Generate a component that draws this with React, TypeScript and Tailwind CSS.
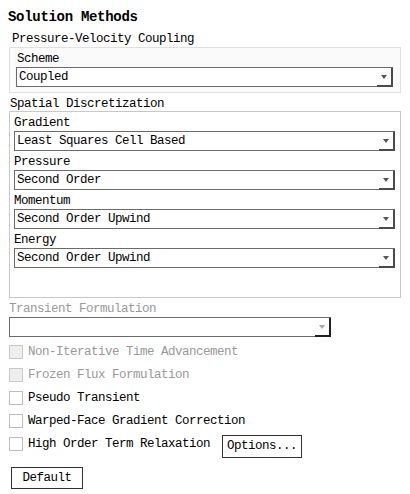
import React from 'react'

const mono = "font-['Liberation_Mono','DejaVu_Sans_Mono',monospace] text-[12.5px] tracking-[-0.5px]"

const Select: React.FC<{ value?: string; disabled?: boolean; className?: string }> = ({ value, disabled, className }) => (
  <div className={`flex h-[20px] border-t border-l border-[#6b6b6b] bg-white ${className ?? ''}`}>
    <span className={`flex-1 border-b border-[#6b6b6b] pl-[2px] leading-[19px] ${disabled ? 'text-[#999]' : 'text-black'}`}>
      {value}
    </span>
    <span className={`flex w-[16px] items-center justify-center border-r-2 border-b-2 ${disabled ? 'border-[#222]' : 'border-[#4a4a4a]'}`}>
      <span
        className={`h-0 w-0 border-t-[4px] border-r-[3px] border-l-[3px] border-r-transparent border-l-transparent ${
          disabled ? 'border-t-[#aaa]' : 'border-t-[#555]'
        }`}
      />
    </span>
  </div>
)

const Check: React.FC<{ label: string; disabled?: boolean }> = ({ label, disabled }) => (
  <div className="flex h-[23px] items-center">
    <span
      className={`h-[14px] w-[14px] border ${disabled ? 'border-[#c8c8c8] bg-[#eeeeee]' : 'border-[#bdbdbd] bg-white'}`}
    />
    <span className={`ml-[5px] pt-[1px] whitespace-nowrap ${disabled ? 'text-[#999]' : 'text-black'}`}>{label}</span>
  </div>
)

const Label: React.FC<{ children: React.ReactNode; className?: string }> = ({ children, className }) => (
  <div className={`h-[19px] pt-[3px] leading-[16px] whitespace-nowrap ${className ?? ''}`}>{children}</div>
)

export default function App() {
  return (
    <div className={`h-[494px] w-[410px] overflow-hidden bg-white text-black ${mono}`}>
      {/* header */}
      <div className="pt-[8px] pl-[8px]">
        <div className="h-[18px] text-[14px] leading-[18px] font-bold tracking-[-0.3px]">Solution Methods</div>
      </div>
      <Label className="mt-[2px] pl-[12px]">Pressure-Velocity Coupling</Label>

      {/* coupling group */}
      <div className="ml-[9px] w-[392px] border border-[#e0e0e0] bg-[#fafafa] pb-[5px]">
        <Label className="pl-[7px]">Scheme</Label>
        <Select value="Coupled" className="ml-[6px] w-[377px]" />
      </div>

      <div className="mt-[2px] h-[16px] pt-[2px] pl-[10px] leading-[14px] whitespace-nowrap">Spatial Discretization</div>

      {/* spatial group */}
      <div className="ml-[9px] w-[392px] border border-[#c8c8c8] pb-[29px]">
        <Label className="pl-[4px]">Gradient</Label>
        <Select value="Least Squares Cell Based" className="ml-[4px] w-[381px]" />
        <Label className="pl-[4px]">Pressure</Label>
        <Select value="Second Order" className="ml-[4px] w-[381px]" />
        <Label className="pl-[4px]">Momentum</Label>
        <Select value="Second Order Upwind" className="ml-[4px] w-[381px]" />
        <Label className="pl-[4px]">Energy</Label>
        <Select value="Second Order Upwind" className="ml-[4px] w-[381px]" />
      </div>

      {/* transient */}
      <div className="pl-[9px]">
        <Label className="text-[#999]">Transient Formulation</Label>
        <Select disabled className="w-[322px]" />
        <div className="mt-[3px]">
          <Check label="Non-Iterative Time Advancement" disabled />
          <Check label="Frozen Flux Formulation" disabled />
          <Check label="Pseudo Transient" />
          <Check label="Warped-Face Gradient Correction" />
          <div className="flex items-start">
            <Check label="High Order Term Relaxation" />
            <button className="mt-[3px] ml-[12px] h-[23px] w-[80px] border border-[#333] bg-white leading-[21px] whitespace-nowrap">
              Options...
            </button>
          </div>
        </div>
        <button className="mt-[9px] ml-[2px] h-[22px] w-[72px] border border-[#333] bg-white leading-[20px]">Default</button>
      </div>
    </div>
  )
}
